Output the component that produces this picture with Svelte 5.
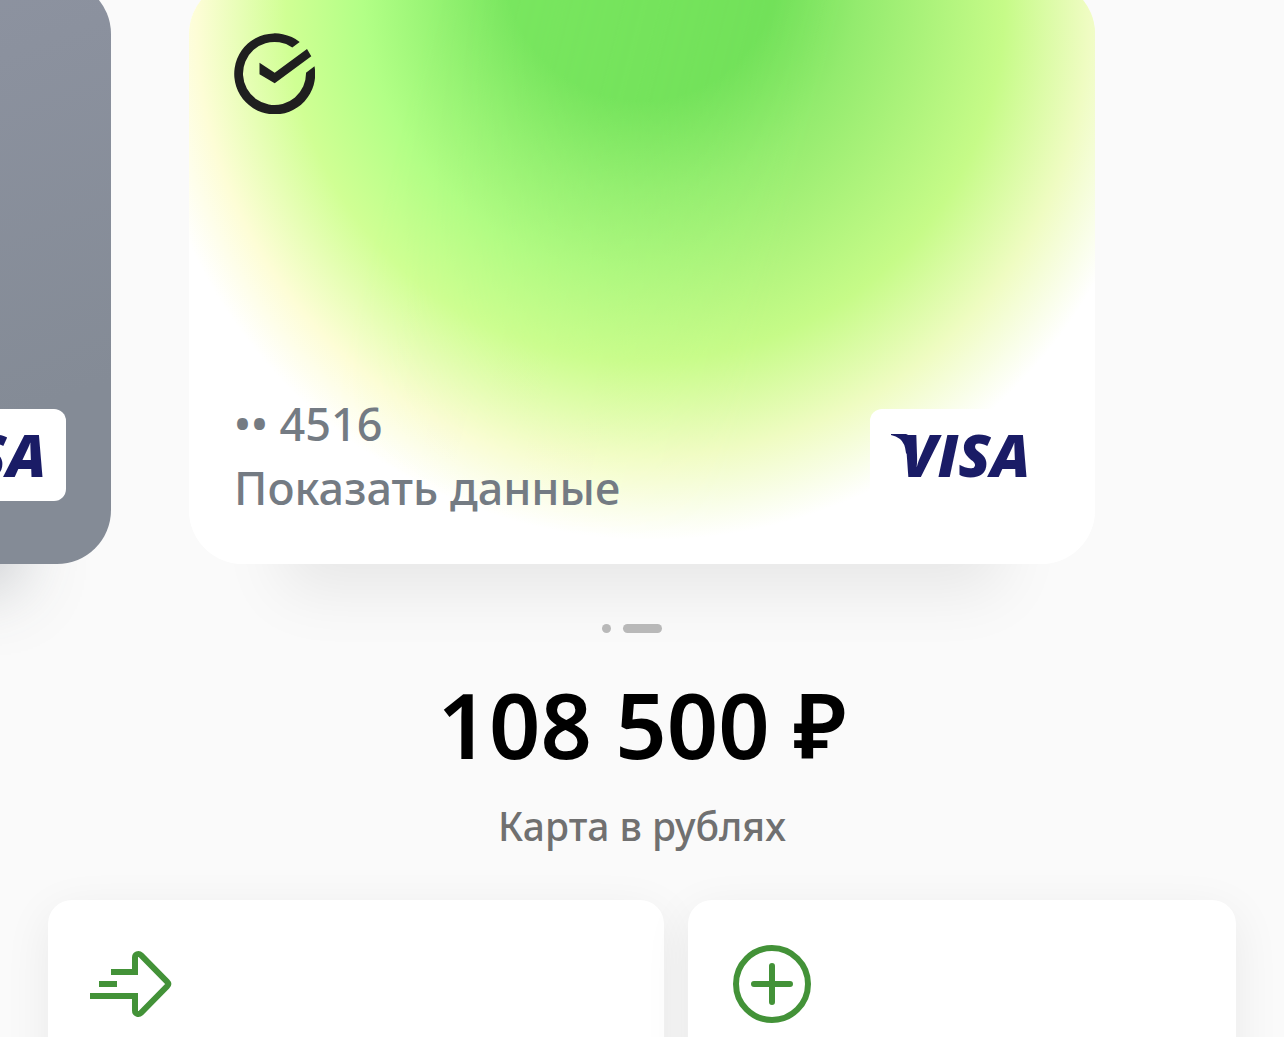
<script>
  let activeCard = 1;

  const card = {
    digits: '4516',
    balance: '108 500 ₽',
    title: 'Карта в рублях'
  };
</script>

{#snippet visa()}
  <div class="visa">
    <svg width="180" height="92" viewBox="0 0 180 92" role="img" aria-label="Visa">
      <path d="M21 25H36Q40 26 40 31V48L36 44Q35 34 30 30Q26 27 21 26Z" fill="#1a1c66" />
      <text x="31" y="68" class="visa-text">VISA</text>
    </svg>
  </div>
{/snippet}

<main>
  <section class="carousel">
    <div class="previous">
      <article class="card gray">
        <div class="card-footer">
          <div></div>
          {@render visa()}
        </div>
      </article>
    </div>

    <article class="card green">
      <svg class="card-bg" viewBox="0 0 906 584" preserveAspectRatio="none" aria-hidden="true">
        <defs>
          <radialGradient id="glow-left" gradientUnits="userSpaceOnUse" cx="463" cy="50" r="510" fx="449" fy="-42">
            <stop offset="0.27" stop-color="#7be861" />
            <stop offset="0.555" stop-color="#b2ff86" />
            <stop offset="0.71" stop-color="#d0ff94" />
            <stop offset="0.89" stop-color="#fdfdd6" />
            <stop offset="1" stop-color="#ffffff" />
          </radialGradient>
          <radialGradient id="glow-right" gradientUnits="userSpaceOnUse" cx="463" cy="50" r="510" fx="449" fy="-42">
            <stop offset="0.27" stop-color="#70df58" />
            <stop offset="0.42" stop-color="#93eb6e" />
            <stop offset="0.7" stop-color="#c6fb88" />
            <stop offset="0.86" stop-color="#effcc2" />
            <stop offset="1" stop-color="#ffffff" />
          </radialGradient>
          <linearGradient id="fade" gradientUnits="userSpaceOnUse" x1="250" y1="0" x2="640" y2="100">
            <stop offset="0" stop-color="#000" />
            <stop offset="1" stop-color="#fff" />
          </linearGradient>
          <mask id="right-side">
            <rect width="906" height="584" fill="url(#fade)" />
          </mask>
        </defs>
        <rect width="906" height="584" fill="url(#glow-left)" />
        <rect width="906" height="584" fill="url(#glow-right)" mask="url(#right-side)" />
      </svg>

      <svg class="logo" width="81" height="81" viewBox="0 0 81 81" fill="#1f1f1f" role="img" aria-label="Сбер">
        <path d="M65.7 9A40.5 40.5 0 1 0 80.5 33.3L72 39.7A31.5 31.5 0 1 1 58.3 14.5Z" />
        <path d="M25.5 29.7L40.7 39.8L73 16L77.3 23.3L40.7 50.3L25.5 41.3Z" />
      </svg>

      <div class="card-footer">
        <div class="details">
          <span>•• {card.digits}</span>
          <button type="button">Показать данные</button>
        </div>
        {@render visa()}
      </div>
    </article>
  </section>

  <nav class="dots">
    {#each [0, 1] as i}
      <button
        type="button"
        class:active={i === activeCard}
        aria-label="Карта {i + 1}"
        on:click={() => (activeCard = i)}
      ></button>
    {/each}
  </nav>

  <h1>{card.balance}</h1>
  <p>{card.title}</p>

  <section class="actions">
    <button type="button" aria-label="Перевести">
      <svg width="96" height="96" viewBox="0 0 96 96">
        <path d="M27 36H51V21.5C51 18.2 54.5 16.8 57 19.1L83 45.6Q85.4 48 83 50.4L57 76.9C54.5 79.2 51 77.8 51 74.5V60H6M15 48H33" />
      </svg>
    </button>
    <button type="button" aria-label="Пополнить">
      <svg width="96" height="96" viewBox="0 0 96 96" stroke-linecap="round">
        <circle cx="48" cy="48" r="36" />
        <path d="M30 48H66M48 30V66" />
      </svg>
    </button>
  </section>
</main>

<style>
  :global(body) {
    margin: 0;
    background: #fafafa;
  }

  main {
    height: 100vh;
    overflow: hidden;
    display: flex;
    flex-direction: column;
    background: #fafafa;
    font-family: 'Noto Sans', 'Open Sans', sans-serif;
    text-align: center;
  }

  button {
    padding: 0;
    border: none;
    font: inherit;
    color: inherit;
    cursor: pointer;
  }

  .carousel {
    flex-shrink: 0;
    display: grid;
    grid-template-columns: minmax(0, 1fr) minmax(0, 906px) minmax(0, 1fr);
    gap: 78px;
    margin-top: -20px;
  }

  .previous {
    display: flex;
    justify-content: flex-end;
  }

  .card {
    position: relative;
    box-sizing: border-box;
    width: 100%;
    min-height: 584px;
    padding: 53px 45px 44px;
    display: flex;
    flex-direction: column;
    justify-content: space-between;
    border-radius: 54px;
    text-align: left;
  }

  .gray {
    flex: none;
    width: 906px;
    justify-content: flex-end;
    background: linear-gradient(160deg, #9297a6, #848b96 80%);
    box-shadow: 0 116px 60px -90px rgba(70, 80, 90, 0.25);
  }

  .green {
    background: #fff;
    box-shadow: 0 120px 60px -94px rgba(0, 0, 0, 0.08);
  }

  .card-bg {
    position: absolute;
    inset: 0;
    width: 100%;
    height: 100%;
    border-radius: 54px;
  }

  .logo {
    position: relative;
  }

  .card-footer {
    position: relative;
    display: flex;
    justify-content: space-between;
    align-items: flex-end;
  }

  .details {
    display: flex;
    flex-direction: column;
    align-items: flex-start;
    font-size: 45px;
    line-height: 64px;
    font-weight: 500;
    color: #747b83;
  }

  .details button {
    background: none;
  }

  .visa {
    height: 92px;
    margin-bottom: 19px;
    border-radius: 12px;
    background: #fff;
  }

  .visa-text {
    font-family: 'Open Sans', sans-serif;
    font-size: 59px;
    font-weight: 800;
    font-style: italic;
    fill: #1a1c66;
  }

  .dots {
    display: flex;
    justify-content: center;
    gap: 12px;
    margin-top: 60px;
    padding-right: 20px;
  }

  .dots button {
    width: 9px;
    height: 9px;
    border-radius: 5px;
    background: #bababa;
  }

  .dots .active {
    width: 39px;
  }

  h1 {
    margin: 43px 0 0;
    font-size: 90px;
    line-height: 96px;
    font-weight: 600;
    color: #000;
  }

  p {
    margin: 26px 0 0;
    font-size: 39px;
    line-height: 56px;
    font-weight: 500;
    color: #707070;
  }

  .actions {
    display: grid;
    grid-template-columns: 9fr 8fr;
    gap: 24px;
    margin-top: 46px;
    padding: 0 48px;
  }

  .actions button {
    display: flex;
    align-items: flex-start;
    height: 240px;
    padding: 36px;
    border-radius: 24px;
    background: #fff;
    box-shadow: 0 12px 48px rgba(0, 0, 0, 0.07);
  }

  .actions svg {
    fill: none;
    stroke: #439238;
    stroke-width: 6;
  }
</style>
